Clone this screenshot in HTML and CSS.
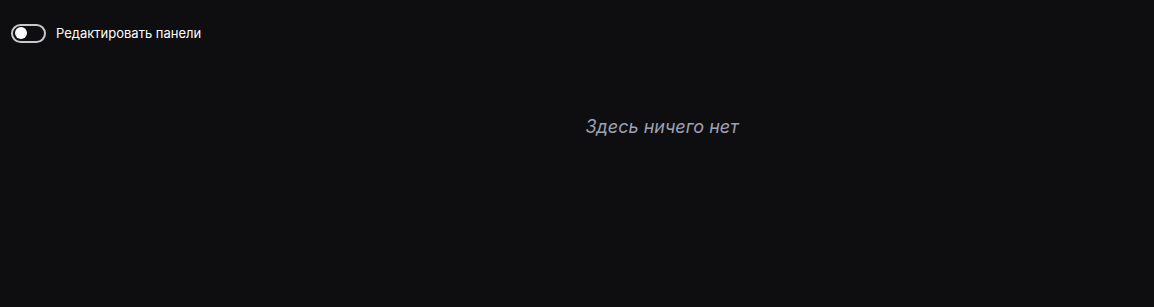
FILE: index.html
```html
<!DOCTYPE html>
<html lang="ru">
<head>
<meta charset="utf-8">
<link rel="stylesheet" href="styles.css">
</head>
<body>
<div class="page">
  <div class="toolbar">
    <label class="switch">
      <span class="track"><span class="knob"></span></span>
      <span class="label">Редактировать панели</span>
    </label>
  </div>
  <div class="empty">Здесь ничего нет</div>
</div>
</body>
</html>
```
FILE: styles.css
```css
html, body {
  margin: 0;
  padding: 0;
  background: #0e0e10;
  height: 100%;
}
.page {
  font-family: Inter, Roboto, sans-serif;
  color: #ffffff;
  padding: 23px 11px 0;
}
.toolbar {
  display: flex;
  align-items: center;
  height: 20px;
}
.switch {
  display: flex;
  align-items: center;
  gap: 10px;
}
.track {
  box-sizing: border-box;
  width: 35px;
  height: 19px;
  border: 2px solid #c8c8cc;
  border-radius: 10px;
  display: flex;
  align-items: center;
  padding-left: 2px;
}
.knob {
  width: 12px;
  height: 12px;
  border-radius: 50%;
  background: #ffffff;
}
.label {
  font-size: 13px;
  line-height: 16px;
  margin-top: -1px;
}
.empty {
  margin-top: 72px;
  padding-left: 170px;
  text-align: center;
  font-style: italic;
  font-size: 18px;
  line-height: 24px;
  color: #9ea2b2;
  font-family: Inter, Roboto, sans-serif;
}
```
